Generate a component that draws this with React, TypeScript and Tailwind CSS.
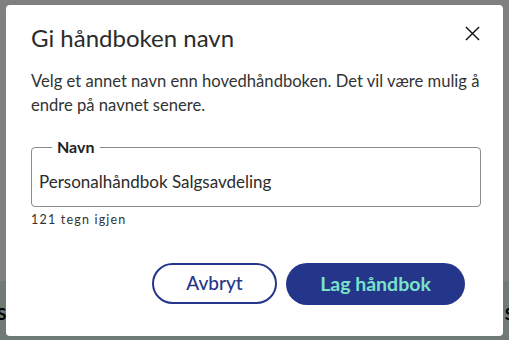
import React from 'react';

function CloseIcon() {
  return (
    <svg className="h-[15px] w-[15px]" viewBox="0 0 16 16" fill="none" stroke="#111" strokeWidth={1.5}>
      <path d="M1 1l14 14M15 1L1 15" />
    </svg>
  );
}

export default function App() {
  return (
    <div className="relative h-[340px] w-[509px] overflow-hidden font-['Lato',sans-serif]">
      {/* page behind the overlay */}
      <div className="h-[281px] bg-[#808080]" />
      <div className="flex h-[59px] items-start justify-between bg-[#707b76] pt-[20px] text-[17px] font-bold text-black">
        <span className="-ml-[3px]">S</span>
        <span className="-mr-[5px]">S</span>
      </div>

      {/* dialog */}
      <div className="absolute left-[6px] top-[5px] flex h-[331px] w-[497px] flex-col rounded-[4px] bg-white pl-[25px] pr-[20px] pt-[18px]">
        <div className="flex items-start justify-between">
          <h2 className="text-[24px] leading-[30px] text-[#2b2b2b]">Gi håndboken navn</h2>
          <button className="mr-[3px] mt-[3px]" aria-label="Lukk">
            <CloseIcon />
          </button>
        </div>

        <p className="mt-[16px] text-[16.6px] leading-[24px] text-[#333]">
          Velg et annet navn enn hovedhåndboken. Det vil være mulig å endre på navnet senere.
        </p>

        <fieldset className="mr-[2px] mt-[21px] h-[69px] rounded-[4px] border border-[#8a8a8a] px-[7px]">
          <legend className="ml-[13px] px-[5px] text-[16px] font-bold leading-[18px] text-[#222]">Navn</legend>
          <div className="pt-[16px] text-[17px] leading-[20px] text-[#2b2b2b]">Personalhåndbok Salgsavdeling</div>
        </fieldset>
        <div className="mt-[4px] text-[12.5px] tracking-[1.2px] text-[#333]">121 tegn igjen</div>

        <div className="mt-[33px] flex justify-end gap-[9px] pr-[18px]">
          <button className="h-[41px] w-[125px] rounded-full border-2 border-[#25368a] text-[19px] font-medium text-[#25368a]">
            Avbryt
          </button>
          <button className="h-[42px] w-[179px] rounded-full bg-[#24358a] text-[19.5px] font-bold text-[#79e2c9]">
            Lag håndbok
          </button>
        </div>
      </div>
    </div>
  );
}
